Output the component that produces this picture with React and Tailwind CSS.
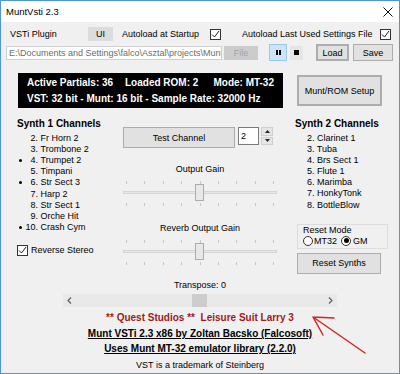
import React from "react";

const Check = () => (
  <span className="w-[11px] h-[11px] bg-white border border-[#333333] flex items-center justify-center shrink-0">
    <svg width="9" height="9" viewBox="0 0 9 9">
      <path d="M1 4.5 L3.5 7 L8 1" fill="none" stroke="#222" strokeWidth="1" />
    </svg>
  </span>
);

const Btn = ({ className, children }) => (
  <div className={`flex items-center justify-center bg-[#e1e1e1] border border-[#adadad] ${className}`}>
    {children}
  </div>
);

const Ticks = () => (
  <div className="flex justify-between px-[3px] h-[3px]">
    {Array.from({ length: 9 }).map((_, i) => (
      <span key={i} className="w-px h-[3px] bg-[#c8c8c8]" />
    ))}
  </div>
);

const Slider = ({ className }) => (
  <div className={`flex flex-col ${className}`}>
    <Ticks />
    <div className="relative h-[19px]">
      <div className="mt-[7px] h-[3px] bg-[#e7e7e7] border border-[#d6d6d6]" />
      <div className="absolute left-[72px] top-0 w-[9px] h-[17px] bg-[#e8e8e8] border border-[#acacac]" />
    </div>
    <Ticks />
  </div>
);

const synth1 = [
  [false, "2.", "Fr Horn 2"],
  [false, "3.", "Trombone 2"],
  [true, "4.", "Trumpet 2"],
  [false, "5.", "Timpani"],
  [true, "6.", "Str Sect 3"],
  [false, "7.", "Harp 2"],
  [false, "8.", "Str Sect 1"],
  [false, "9.", "Orche Hit"],
  [true, "10.", "Crash Cym"],
];

const synth2 = [
  ["2.", "Clarinet 1"],
  ["3.", "Tuba"],
  ["4.", "Brs Sect 1"],
  ["5.", "Flute 1"],
  ["6.", "Marimba"],
  ["7.", "HonkyTonk"],
  ["8.", "BottleBlow"],
];

export default function App() {
  return (
    <div className="relative w-[400px] h-[374px] bg-[#f0f0f0] border border-[#4f95d8] flex flex-col text-[9px] leading-[12px] text-black font-['Liberation_Sans',Arial,sans-serif] overflow-hidden">
      {/* title bar */}
      <div className="h-[21px] bg-white flex items-center justify-between pl-[5px] pr-[6px] shrink-0">
        <span className="text-[9.5px]">MuntVsti 2.3</span>
        <svg width="10" height="10" viewBox="0 0 10 10">
          <path d="M0.5 0.5 L9.5 9.5 M9.5 0.5 L0.5 9.5" stroke="#111" strokeWidth="1" />
        </svg>
      </div>

      {/* row 1 */}
      <div className="mt-[5px] h-[14px] flex items-center pl-[9px] shrink-0">
        <span className="w-[78px]">VSTi Plugin</span>
        <div className="w-[25px] h-[14px] bg-[#dcdcdc] flex items-center justify-center">UI</div>
        <span className="ml-[9px] w-[88px]">Autoload at Startup</span>
        <Check />
        <span className="ml-[21px] w-[138px]">Autoload Last Used Settings File</span>
        <Check />
      </div>

      {/* row 2 */}
      <div className="mt-[3px] h-[17px] flex items-center pl-[5px] shrink-0">
        <div className="w-[216px] h-[14px] bg-white border border-[#d0d0d0] text-[#6d6d6d] px-[2px] whitespace-nowrap overflow-hidden">
          E:\Documents and Settings\falco\Asztal\projects\Munt
        </div>
        <div className="ml-[2px] w-[34px] h-[14px] bg-[#cccccc] text-[#a3a3a3] flex items-center justify-center">File</div>
        <div className="ml-[11px] w-[18px] h-[17px] bg-[#cce4f7] border border-[#99c9ef] flex items-center justify-center gap-[1px]">
          <span className="w-[2px] h-[5px] bg-black" />
          <span className="w-[2px] h-[5px] bg-black" />
        </div>
        <div className="ml-[3px] w-[13px] h-[14px] bg-[#e5e5e5] flex items-center justify-center">
          <span className="w-[5px] h-[5px] bg-black" />
        </div>
        <Btn className="ml-[13px] w-[33px] h-[17px] border-2 border-[#0078d7]">Load</Btn>
        <Btn className="ml-[4px] w-[40px] h-[17px]">Save</Btn>
      </div>

      {/* info row */}
      <div className="mt-[12px] h-[35px] flex pl-[17px] shrink-0">
        <div className="w-[265px] h-[35px] bg-black text-white font-bold text-[10px] leading-[16px] px-[9px] flex flex-col justify-center whitespace-nowrap">
          <div className="flex">
            <span className="w-[98px]">Active Partials: 36</span>
            <span>Loaded ROM: 2</span>
            <span className="ml-auto">Mode: MT-32</span>
          </div>
          <div>VST: 32 bit - Munt: 16 bit - Sample Rate: 32000 Hz</div>
        </div>
        <Btn className="ml-[14px] mt-[2px] w-[85px] h-[31px] border-2 border-[#0078d7]">Munt/ROM Setup</Btn>
      </div>

      {/* main columns */}
      <div className="mt-[10px] flex shrink-0">
        {/* left */}
        <div className="w-[122px] pl-[16px] flex flex-col">
          <div className="font-bold text-[10px] h-[12px] leading-[12px]">Synth 1 Channels</div>
          <div className="mt-[3px] flex flex-col">
            {synth1.map(([dot, num, name]) => (
              <div key={num} className="h-[11.1px] leading-[11px] flex items-center whitespace-nowrap">
                <span className="w-[6px] flex items-center">
                  {dot && <span className="ml-[2px] w-[3px] h-[3px] rounded-full bg-black" />}
                </span>
                <span className="w-[15px] text-right">{num}</span>
                <span className="ml-[2.5px]">{name}</span>
              </div>
            ))}
          </div>
          <div className="mt-[11px] h-[13px] flex items-center">
            <Check />
            <span className="ml-[3px]">Reverse Stereo</span>
          </div>
        </div>

        {/* middle */}
        <div className="w-[154px] flex flex-col">
          <div className="mt-[9px] h-[21px] flex items-start">
            <Btn className="w-[112px] h-[21px]">Test Channel</Btn>
            <div className="ml-[3px] w-[21px] h-[18px] bg-white border border-[#7a7a7a] pl-[2px] flex items-center">2</div>
            <div className="ml-[2px] w-[12px] h-[18px] flex flex-col gap-px">
              <div className="h-[8.5px] bg-[#e5e5e5] border border-[#cfcfcf] flex items-center justify-center">
                <svg width="5" height="3" viewBox="0 0 5 3"><path d="M0 3 L2.5 0 L5 3 Z" fill="#222" /></svg>
              </div>
              <div className="h-[8.5px] bg-[#e5e5e5] border border-[#cfcfcf] flex items-center justify-center">
                <svg width="5" height="3" viewBox="0 0 5 3"><path d="M0 0 L2.5 3 L5 0 Z" fill="#222" /></svg>
              </div>
            </div>
          </div>
          <div className="mt-[15px] h-[12px] text-center">Output Gain</div>
          <Slider className="mt-[6px]" />
          <div className="mt-[16px] h-[12px] text-center">Reverb Output Gain</div>
          <Slider className="mt-[6px]" />
          <div className="mt-[14px] h-[12px] text-center">Transpose: 0</div>
        </div>

        {/* right */}
        <div className="flex-1 pl-[18px] flex flex-col">
          <div className="font-bold text-[10px] h-[12px] leading-[12px]">Synth 2 Channels</div>
          <div className="mt-[3px] pl-[12px] flex flex-col">
            {synth2.map(([num, name]) => (
              <div key={num} className="h-[11.1px] leading-[11px] whitespace-nowrap">
                {num} {name}
              </div>
            ))}
          </div>
          <div className="mt-[13px] ml-[2px] w-[91px] h-[25px] border border-[#dcdcdc] flex flex-col pl-[5px]">
            <div className="h-[10px] leading-[10px]">Reset Mode</div>
            <div className="flex items-center h-[12px]">
              <span className="w-[10px] h-[10px] rounded-full bg-white border border-[#333333]" />
              <span className="ml-[1px]">MT32</span>
              <span className="ml-[4px] w-[10px] h-[10px] rounded-full bg-white border border-[#333333] flex items-center justify-center">
                <span className="w-[5px] h-[5px] rounded-full bg-black" />
              </span>
              <span className="ml-[2px]">GM</span>
            </div>
          </div>
          <Btn className="mt-[4px] ml-[2px] w-[84px] h-[21px]">Reset Synths</Btn>
        </div>
      </div>

      {/* transpose scrollbar */}
      <div className="mt-[3px] ml-[62px] w-[274px] h-[13px] bg-[#e9e9e9] flex shrink-0">
        <div className="w-[13px] flex items-center justify-center">
          <svg width="5" height="7" viewBox="0 0 5 7"><path d="M4 0.5 L1 3.5 L4 6.5" fill="none" stroke="#606060" strokeWidth="1.2" /></svg>
        </div>
        <div className="flex-1 flex">
          <div className="ml-[116px] w-[15px] h-[13px] bg-[#cdcdcd]" />
        </div>
        <div className="w-[13px] flex items-center justify-center">
          <svg width="5" height="7" viewBox="0 0 5 7"><path d="M1 0.5 L4 3.5 L1 6.5" fill="none" stroke="#606060" strokeWidth="1.2" /></svg>
        </div>
      </div>

      {/* credits */}
      <div className="mt-[5px] h-[12px] text-center font-bold text-[10px] text-[#9e1b1b] whitespace-pre">
        {"** Quest Studios **  Leisure Suit Larry 3"}
      </div>
      <div className="mt-[4px] h-[12px] text-center font-bold text-[10px] underline">
        Munt VSTi 2.3 x86 by Zoltan Bacsko (Falcosoft)
      </div>
      <div className="mt-[3px] h-[12px] text-center font-bold text-[10px] underline">
        Uses Munt MT-32 emulator library (2.2.0)
      </div>
      <div className="mt-[4px] h-[12px] text-center">VST is a trademark of Steinberg</div>

      {/* red annotation arrow */}
      <svg className="absolute left-0 top-0 pointer-events-none" width="400" height="374" viewBox="0 0 400 374">
        <path
          d="M312 316 L364 352 M312 316 L333 317 M312 316 L322 334"
          fill="none"
          stroke="#d42525"
          strokeWidth="1.5"
          strokeLinecap="round"
        />
      </svg>
    </div>
  );
}
